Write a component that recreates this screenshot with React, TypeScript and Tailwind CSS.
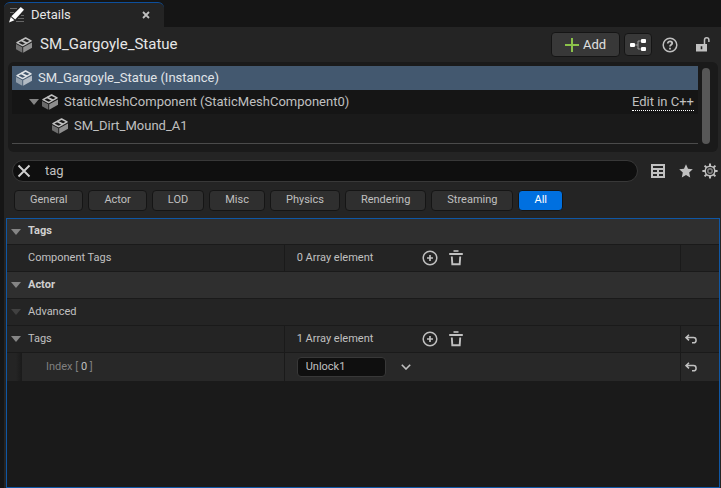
import type { ReactNode } from "react";
import clsx from "clsx";

const filters = ["General", "Actor", "LOD", "Misc", "Physics", "Rendering", "Streaming", "All"];

function MeshIcon({ className }: { className?: string }) {
  return (
    <svg viewBox="0 0 16 16" className={clsx("h-4 w-4 shrink-0", className)} fill="none" aria-hidden="true">
      <path d="M0 7 6.3 10.2v5.6L0 12.3z" fill="currentColor" opacity="0.5" />
      <path d="M7.2 10.2 16 5.6v5.2L7.2 15.8z" fill="currentColor" opacity="0.7" />
      <path d="M1 5.6 9.6 1 15 3.9 6.7 8.6z" stroke="currentColor" strokeWidth="1.5" strokeLinejoin="round" />
      <path d="M5 3.2 11 6.4" stroke="currentColor" strokeWidth="1.8" />
    </svg>
  );
}

function DetailsIcon() {
  return (
    <svg viewBox="0 0 16 16" className="h-4 w-4 shrink-0" aria-hidden="true">
      <path d="M1 1.5h7M1 5.5h4M12 8.5h3M9 11.5h6M7 14.5h8" stroke="#666" strokeWidth="1" />
      <path d="M11.8 0 15 2.8 6.2 12.4 2.4 9.2z" fill="#fff" />
      <path d="M1.8 10 5.4 13.2 0 15.4z" fill="#fff" />
    </svg>
  );
}

function NodesIcon() {
  return (
    <svg viewBox="0 0 16 12" className="h-3 w-4" aria-hidden="true">
      <path d="M4 6h4M12 2H8v8h4" fill="none" stroke="#999" strokeWidth="1" />
      <rect x="0" y="4" width="5" height="4" rx="1" fill="#fff" />
      <rect x="11" y="0" width="5" height="4" rx="1" fill="#fff" />
      <rect x="11" y="8" width="5" height="4" rx="1" fill="#fff" />
    </svg>
  );
}

function HelpIcon() {
  return (
    <svg viewBox="0 0 16 16" className="h-4 w-4" fill="none" stroke="currentColor" aria-hidden="true">
      <circle cx="8" cy="8" r="6.8" strokeWidth="1.5" />
      <path d="M5.8 6.4C5.8 3.6 10.2 3.8 10.2 6.3 10.2 7.8 8 7.9 8 9.6" strokeWidth="1.8" />
      <path d="M8 10.8v1.6" strokeWidth="1.8" />
    </svg>
  );
}

function UnlockIcon() {
  return (
    <svg viewBox="0 0 16 16" className="h-4 w-4" aria-hidden="true">
      <path d="M9.5 7.5V3a2.2 2.2 0 0 1 4.4 0V5" fill="none" stroke="currentColor" strokeWidth="1.5" />
      <path fillRule="evenodd" d="M1 7h11v7.5H1zM5.7 9.2v3h1.6v-3z" fill="currentColor" />
    </svg>
  );
}

function TableIcon() {
  return (
    <svg viewBox="0 0 14 14" className="h-3.5 w-3.5" fill="currentColor" aria-hidden="true">
      <path fillRule="evenodd" d="M0 0h14v14H0zM2 2v2h10V2zM2 6v2h4V6zM8 6v2h4V6zM2 10v2h4v-2zM8 10v2h4v-2z" />
    </svg>
  );
}

function StarIcon() {
  return (
    <svg viewBox="0 0 14 14" className="h-3.5 w-3.5" fill="currentColor" aria-hidden="true">
      <path d="M7 0.3 9 4.8 13.8 5.3 10.2 8.5 11.2 13.4 7 10.9 2.8 13.4 3.8 8.5 0.2 5.3 5 4.8z" />
    </svg>
  );
}

function GearIcon() {
  return (
    <svg viewBox="0 0 16 16" className="h-4 w-4" fill="none" stroke="currentColor" aria-hidden="true">
      <circle cx="8" cy="8" r="4.8" strokeWidth="1.5" />
      <circle cx="8" cy="8" r="2.2" strokeWidth="1.4" opacity="0.6" />
      <path
        d="M8 0.4v2.8M8 12.8v2.8M0.4 8h2.8M12.8 8h2.8M2.6 2.6l2 2M11.4 11.4l2 2M13.4 2.6l-2 2M4.6 11.4l-2 2"
        strokeWidth="2"
      />
    </svg>
  );
}

function AddCircleIcon() {
  return (
    <svg viewBox="0 0 16 16" className="h-4 w-4" fill="none" stroke="currentColor" aria-hidden="true">
      <circle cx="8" cy="8" r="6.8" strokeWidth="1.5" />
      <path d="M8 5v6M5 8h6" strokeWidth="1.7" />
    </svg>
  );
}

function TrashIcon() {
  return (
    <svg viewBox="0 0 16 16" className="h-4 w-4" fill="none" stroke="currentColor" aria-hidden="true">
      <path d="M5.5 1h5" strokeWidth="1.6" />
      <path d="M1.2 4h13.6" strokeWidth="2" />
      <path d="M3.8 6.5 4.3 14.2h7.4L12.2 6.5" strokeWidth="1.9" />
    </svg>
  );
}

function ResetIcon() {
  return (
    <svg viewBox="0 0 12 10" className="h-2.5 w-3" fill="none" stroke="currentColor" aria-hidden="true">
      <path d="M4 0.8 1 3.6 4 6.4M1 3.6h7.5a2.6 2.6 0 0 1 0 5.2H7" strokeWidth="1.5" />
    </svg>
  );
}

function Expander({ label, dim = false }: { label: string; dim?: boolean }) {
  return (
    <button type="button" aria-label={`Toggle ${label}`} className={dim ? "text-[#414141]" : "text-[#858585]"}>
      <svg viewBox="0 0 10 6" className="h-1.5 w-2.5" fill="currentColor" aria-hidden="true">
        <path d="M0 0h10L5 6z" />
      </svg>
    </button>
  );
}

function IconButton({ label, children }: { label: string; children: ReactNode }) {
  return (
    <button type="button" aria-label={label} className="flex items-center text-[#c0c0c0] hover:text-white">
      {children}
    </button>
  );
}

function CategoryRow({ label }: { label: string }) {
  return (
    <tr className="h-[27px] bg-[#2f2f2f] first:h-[26px]">
      <th colSpan={3} scope="colgroup" className="border-b border-[#1a1a1a] p-0 pl-1 text-left font-bold text-[#cfcfcf]">
        <div className="flex items-center gap-[7px]">
          <Expander label={label} />
          {label}
        </div>
      </th>
    </tr>
  );
}

function ArrayRow({ label, count, expandable = false }: { label: string; count: number; expandable?: boolean }) {
  return (
    <tr className="h-[27px] bg-[#242424]">
      <th
        scope="row"
        className={clsx("border-r border-b border-[#1a1a1a] p-0 text-left font-normal", expandable ? "pl-1" : "pl-[21px]")}
      >
        <div className="flex items-center gap-[7px]">
          {expandable && <Expander label={label} />}
          {label}
        </div>
      </th>
      <td className="border-r border-b border-[#1a1a1a] p-0 pl-3">
        <div className="flex items-center">
          <span className="w-[125px]">{count} Array element</span>
          <div className="flex gap-2.5">
            <IconButton label={`Add element to ${label}`}>
              <AddCircleIcon />
            </IconButton>
            <IconButton label={`Empty ${label}`}>
              <TrashIcon />
            </IconButton>
          </div>
        </div>
      </td>
      <td className="border-b border-[#1a1a1a] p-0 pl-1">
        {expandable && (
          <IconButton label={`Reset ${label}`}>
            <ResetIcon />
          </IconButton>
        )}
      </td>
    </tr>
  );
}

function ComponentTree() {
  return (
    <section aria-label="Components" className="mr-[3px] ml-1 flex gap-1 rounded-md bg-[#1a1a1a] pt-1 pr-2 pb-2 pl-1 text-[13px] text-[#c0c0c0]">
      <div className="min-w-0 flex-1">
        <ul className="border-b border-[#4b4b4b] pb-[5px]">
          <li className="flex h-6 items-center gap-1.5 bg-[#43586f] pl-1 text-[#e0e4e8]">
            <MeshIcon />
            SM_Gargoyle_Statue (Instance)
          </li>
          <li className="flex h-6 items-center bg-[#151515] pr-1 pl-[17px]">
            <Expander label="StaticMeshComponent" />
            <MeshIcon className="mr-1.5 ml-[3px]" />
            StaticMeshComponent (StaticMeshComponent0)
            <a href="#edit" className="ml-auto border-b border-dotted border-white leading-4">
              Edit in C++
            </a>
          </li>
          <li className="flex h-6 items-center gap-1.5 pl-10">
            <MeshIcon />
            SM_Dirt_Mound_A1
          </li>
        </ul>
      </div>
      <div className="mt-0.5 w-2 rounded-full bg-[#575757]" />
    </section>
  );
}

export default function App() {
  return (
    <div className="flex min-h-screen flex-col bg-[#151515] pt-0.5 pl-1 font-[Roboto,sans-serif] text-[#c0c0c0]">
      <div className="flex h-[25px] w-40 items-center rounded-t-md border-t border-[#0d4f9c] bg-[#242424] pr-3 pl-[5px] text-[#e6e6e6]">
        <DetailsIcon />
        <span className="ml-1.5 text-[13px]">Details</span>
        <button type="button" aria-label="Close tab" className="ml-auto p-0.5 text-[#c0c0c0]">
          <svg viewBox="0 0 8 8" className="h-2 w-2" aria-hidden="true">
            <path d="M1 1 7 7M7 1 1 7" stroke="currentColor" strokeWidth="1.8" />
          </svg>
        </button>
      </div>

      <main className="flex flex-1 flex-col bg-[#242424]">
        <header className="flex h-[35px] items-center pr-2.5 pl-3">
          <MeshIcon />
          <h1 className="ml-2 text-[15px] text-[#e6e6e6]">SM_Gargoyle_Statue</h1>
          <div className="ml-auto flex items-center">
            <button
              type="button"
              className="flex h-[25px] w-[69px] items-center justify-center gap-1 rounded border border-[#151515] bg-[#383838] text-[13px] text-[#e0e0e0]"
            >
              <svg viewBox="0 0 14 14" className="h-3.5 w-3.5" aria-hidden="true">
                <path d="M7 0v14M0 7h14" stroke="#8bc24a" strokeWidth="2" />
              </svg>
              Add
            </button>
            <button
              type="button"
              aria-label="Edit blueprint"
              className="mr-2.5 ml-1 flex h-[23px] w-7 items-center justify-center rounded border border-[#151515] bg-[#383838]"
            >
              <NodesIcon />
            </button>
            <div className="flex gap-[17px]">
              <IconButton label="Help">
                <HelpIcon />
              </IconButton>
              <IconButton label="Lock selection">
                <UnlockIcon />
              </IconButton>
            </div>
          </div>
        </header>

        <ComponentTree />

        <div className="mt-2 flex items-center pr-[3px] pl-2">
          <div className="flex h-[22px] flex-1 items-center rounded-full border border-[#383838] bg-[#0f0f0f] pl-1">
            <button type="button" aria-label="Clear search" className="text-[#d0d0d0]">
              <svg viewBox="0 0 14 14" className="h-3.5 w-3.5" aria-hidden="true">
                <path d="M1.5 1.5 12.5 12.5M12.5 1.5 1.5 12.5" stroke="currentColor" strokeWidth="1.9" />
              </svg>
            </button>
            <input
              type="text"
              aria-label="Search details"
              defaultValue="tag"
              className="ml-3.5 h-5 min-w-0 flex-1 bg-transparent pb-0.5 text-[13px] outline-none"
            />
          </div>
          <div className="ml-[13px] flex items-center">
            <IconButton label="Property matrix">
              <TableIcon />
            </IconButton>
            <div className="mr-[9px] ml-3.5">
              <IconButton label="Favorites">
                <StarIcon />
              </IconButton>
            </div>
            <IconButton label="Settings">
              <GearIcon />
            </IconButton>
          </div>
        </div>

        <div className="mt-2 mb-[7px] flex flex-wrap gap-[5px] pl-2.5">
          {filters.map((filter) => (
            <button
              key={filter}
              type="button"
              aria-pressed={filter === "All"}
              className={clsx(
                "h-[21px] rounded border border-[#151515] px-[15px] text-[11px]",
                filter === "All" ? "bg-[#0070e0] text-white" : "bg-[#2f2f2f]",
              )}
            >
              {filter}
            </button>
          ))}
        </div>

        <div className="mr-px ml-0.5 flex-1 border border-[#0f57a5] bg-[#1a1a1a]">
          <table className="w-full table-fixed border-separate border-spacing-0 text-[11px]">
            <colgroup>
              <col className="w-[39%]" />
              <col />
              <col className="w-[38px]" />
            </colgroup>
            <tbody>
              <CategoryRow label="Tags" />
              <ArrayRow label="Component Tags" count={0} />
              <CategoryRow label="Actor" />
              <tr className="h-[27px] bg-[#242424]">
                <th colSpan={3} scope="colgroup" className="border-b border-[#1a1a1a] p-0 pl-1 text-left font-normal">
                  <div className="flex items-center gap-[7px]">
                    <Expander label="Advanced" dim />
                    Advanced
                  </div>
                </th>
              </tr>
              <ArrayRow label="Tags" count={1} expandable />
              <tr className="h-7 bg-[#282828]">
                <th scope="row" className="border-r border-[#1a1a1a] p-0 text-left font-normal text-[#808080]">
                  <div className="flex h-7 items-center">
                    <span className="mr-6 h-full w-[15px] bg-linear-to-r from-[#242424] from-60% to-[#1a1a1a]" />
                    <label htmlFor="tag-0">
                      Index [ <span className="text-[#c0c0c0]">0</span> ]
                    </label>
                  </div>
                </th>
                <td className="border-r border-[#1a1a1a] p-0 pl-3">
                  <div className="flex items-center gap-[15px]">
                    <input
                      id="tag-0"
                      type="text"
                      defaultValue="Unlock1"
                      className="h-5 w-[89px] rounded border border-[#383838] bg-[#0f0f0f] px-2 pb-0.5 outline-none"
                    />
                    <IconButton label="Element options">
                      <svg viewBox="0 0 10 6" className="h-1.5 w-2.5" fill="none" aria-hidden="true">
                        <path d="M0.8 0.8 5 5 9.2 0.8" stroke="currentColor" strokeWidth="1.6" />
                      </svg>
                    </IconButton>
                  </div>
                </td>
                <td className="p-0 pl-1">
                  <IconButton label="Reset element">
                    <ResetIcon />
                  </IconButton>
                </td>
              </tr>
            </tbody>
          </table>
        </div>
      </main>
    </div>
  );
}
